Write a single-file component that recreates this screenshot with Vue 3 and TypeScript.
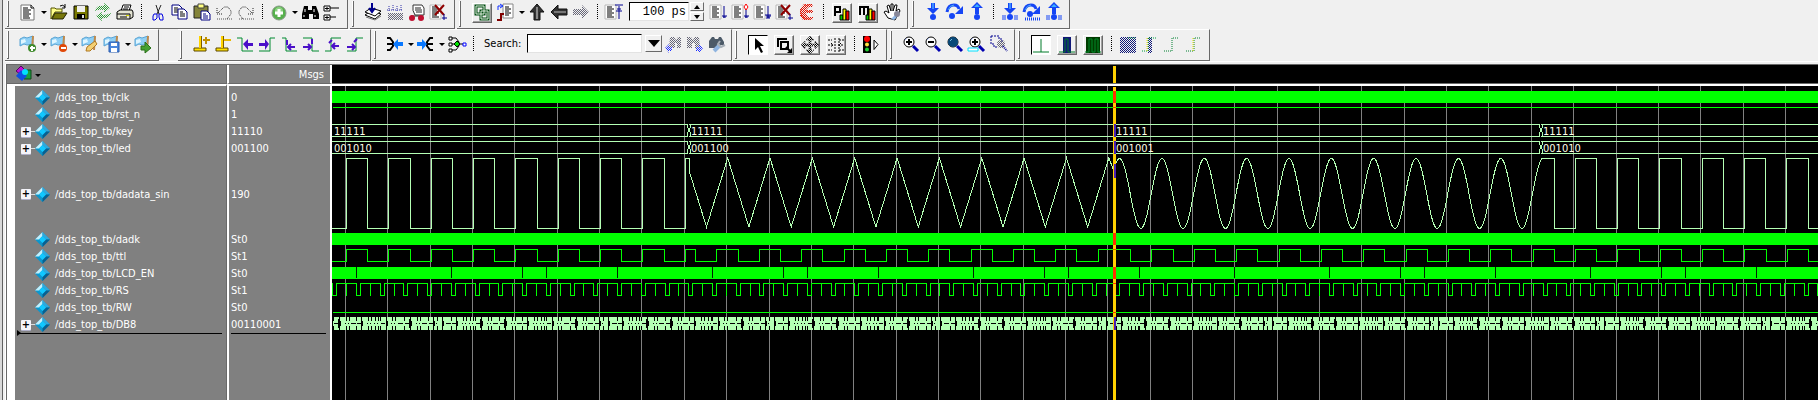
<script setup lang="ts">
import { ref } from 'vue'

type Item =
  | { kind: 'icon' | 'raised' | 'pressed' | 'tight'; icon: string; label: string }
  | { kind: 'caret' | 'sep' | 'time' | 'search' }

const icon = (name: string, label: string): Item => ({ kind: 'icon', icon: name, label })
const raised = (name: string, label: string): Item => ({ kind: 'raised', icon: name, label })
const pressed = (name: string, label: string): Item => ({ kind: 'pressed', icon: name, label })
const caret: Item = { kind: 'caret' }
const sep: Item = { kind: 'sep' }

const doc = '<path d="M1 3h11v14h-11z" fill="#fff" stroke="#b8b8b8"/><path d="M3 5h5M3 7h7M3 9h5M3 11h7M3 13h5M3 15h7" stroke="#000"/>'
const flag = '<path d="M2 5l4-2 3 1 6-2v8l-6 1-3-1-4 2z" fill="#8fd0f6" stroke="#5aa4d4"/><path d="M3 6l4-1 1 3-5 2z" fill="#e0f6ff"/><path d="M14 2l2 0-1 14-2 0z" fill="#c08a4c"/>'
const pole = '<path d="M3 14h12v3h-12z" fill="#ffe000" stroke="#5a4600"/><path d="M8 2h2v12h-2z" fill="#ffd400"/><path d="M10.500 2v12" stroke="#7a5c00"/>'
const lens = '<circle cx="8" cy="8" r="5" fill="#fff" stroke="#000"/><path d="M12 12l5 5" stroke="#0000b0" stroke-width="3"/><path d="M4 6l2-2" stroke="#9ad"/>'
const chart = '<path d="M8 12h3v5h-3z" fill="#0c0" stroke="#000"/><path d="M11 6h3v11h-3z" fill="#ff0" stroke="#000"/><path d="M14 8h3v9h-3z" fill="#f00" stroke="#000"/>'
const downArrow = '<path d="M8 1h4v5h4l-6 6-6-6h4z" fill="#1545f5"/><path d="M9 1h2v6h-2z" fill="#3b8cff"/>'
const upArrow = '<path d="M10 0l6 6h-4v6h-4V6h-4z" fill="#1545f5"/><path d="M10 2l3 3h-6z" fill="#3bb0ff"/>'
const curve = '<path d="M2 10q1-7 7-7 4 0 5 4" fill="none" stroke="#1545f5" stroke-width="3"/><path d="M3 8q2-5 6-5" fill="none" stroke="#4bb0f0"/><path d="M18 4v8h-8z" fill="#1545f5"/>'
const dot = '<circle cx="10" cy="15" r="3" fill="#1545f5"/>'
const bars = '<path d="M3 13v5M5 13v5M15 13v5M17 13v5" stroke="#1545f5"/>'
const stem = '<path d="M15 4v12M13 14h5M14 15h3" stroke="#000090" fill="none"/>'

const icons: Record<string, string> = {
  new: '<path d="M3 3h10l3 3v12H3z" fill="#fff" stroke="#777"/><path d="M13 3v3h3M5 6h5M5 8h8M5 10h6M5 12h8M5 14h6M5 16h7" stroke="#000" fill="none"/>',
  open: '<path d="M2 6h4l1 1h6v3H6l-4 7z" fill="#ffff8c" stroke="#555500"/><path d="M6 11h12l-4 6H3z" fill="#77770a" stroke="#222200"/><path d="M11 4q3-2 5 1M16 2v4h-3" stroke="#000" fill="none"/>',
  save: '<path d="M3 4h14v13H3z" fill="#787800" stroke="#000"/><path d="M6 4h8v6h-8z" fill="#f0f0f0"/><path d="M6 12h8v5h-8z" fill="#000"/><path d="M11 13h2v3h-2z" fill="#ddd"/>',
  refresh: '<path d="M2 9q1-6 9-5V1l6 5-6 5V8Q6 7 2 9z" fill="url(#dither-green)"/><path d="M18 11q-1 6-9 5v3l-6-5 6-4v3q5 0 9-2z" fill="url(#dither-green)"/>',
  print: '<path d="M6 9l2-6h8l-2 6z" fill="#fff" stroke="#000"/><path d="M2 10l3-2h12l1 2v5l-3 2H2z" fill="#e4e4d4" stroke="#000"/><path d="M2 12h13v5M5 15h7M9 5h5M8 7h5" stroke="#000" fill="none"/><path d="M11 13h3v1h-3z" fill="#dd0"/>',
  cut: '<path d="M8 3l3 9M13 3l-4 9" stroke="#222" stroke-width="1" fill="none"/><path d="M6 12h3v4l-2 2H5v-4zM11 12h3l1 3v3h-3l-1-3z" fill="none" stroke="#0000e0"/>',
  copy: '<path d="M2 3h7l3 3v7H2z" fill="#fff" stroke="#000080"/><path d="M4 6h4M4 8h5M4 10h5" stroke="#000"/><path d="M8 7h6l3 3v7H8z" fill="#fff" stroke="#000080"/><path d="M10 10h3M10 12h5M10 14h5" stroke="#000"/>',
  paste: '<path d="M2 4h14v12H2z" fill="#84843a" stroke="#222"/><path d="M6 2h6v4H6z" fill="#ffff80" stroke="#444"/><path d="M9 9h6l3 3v6H9z" fill="#fff" stroke="#000080"/><path d="M11 12h3M11 14h5M11 16h5" stroke="#000080"/>',
  undo: '<path d="M3 6v6h6M4 11l6-6h4l3 4v3l-4 5" fill="none" stroke="#222" stroke-dasharray="1 1"/><path d="M3 17h15" stroke="#555" stroke-dasharray="1 1"/>',
  redo: '<path d="M17 6v6h-6M16 11l-6-6H6L3 9v3l4 5" fill="none" stroke="#222" stroke-dasharray="1 1"/><path d="M3 17h15" stroke="#555" stroke-dasharray="1 1"/>',
  add: '<circle cx="10" cy="11" r="7" fill="#56b04c" stroke="#8a9a88"/><circle cx="10" cy="9" r="4" fill="#8bd080"/><path d="M10 7v8M6 11h8" stroke="#fff" stroke-width="3"/>',
  find: '<path d="M4 4h4v4h4V4h4l3 8v5h-6v-5H9v5H2v-5z" fill="#000"/><path d="M5 7v3M14 7v3M4 13v2M15 13v2" stroke="#fff"/>',
  tree: '<path d="M2 4h6v5H2zM2 13h6v5H2z" fill="#fff" stroke="#000"/><path d="M3 6.500h4M5 5v3M3 15.500h4M5 14v3M8 6h9M8 15h6" stroke="#000"/>',
  stack: '<path d="M2 13l6-4 10 3-6 5z" fill="#fff" stroke="#000"/><path d="M2 10l6-4 10 3-6 5z" fill="#fff" stroke="#000"/><path d="M3 15l9 3 6-4" fill="none" stroke="#777"/><path d="M9 1v8M6 6l3 4 3-4" stroke="#000090" stroke-width="2" fill="none"/>',
  dots: '<path d="M3 11h15v7H3z" fill="url(#dither-gray)"/><path d="M4 4v5M8 3v6M12 4v5M16 3v6M2 8h15" stroke="#3030a8" stroke-dasharray="1 1"/>',
  cart: '<path d="M6 3h9l2 3v7H8q-3-4-2-10z" fill="#fff" stroke="#333"/><path d="M8 6h6M8 8h7M9 10h6M4 14h12" stroke="#222"/><circle cx="5" cy="16" r="3" fill="#c01030"/><circle cx="14" cy="16" r="3" fill="#c01030"/>',
  stop: doc + '<path d="M6 3l9 10M15 3L6 13" stroke="#900000" stroke-width="2"/><path d="M15 12v6M13 16h5" stroke="#000090"/>',
  linked: '<path d="M4 3h8v8H4zM9 8h7v8H9z" fill="none" stroke="#004c10" stroke-width="3"/><path d="M4 3h8v8H4zM9 8h7v8H9z" fill="none" stroke="#e0f0e0"/>',
  restart: '<path d="M7 2h10v14H7z" fill="#fff" stroke="#888"/><path d="M9 5h4M9 7h6M9 9h4M9 11h6M9 13h4" stroke="#000"/><path d="M2 8V4h4M4 2l3 2-3 2" stroke="#1030ff" fill="none"/><path d="M1 18h4v-6h3" stroke="#800000" stroke-width="2" fill="none"/>',
  up: '<path d="M10 2l7 8h-4v8H7v-8H3z" fill="#333" stroke="#111"/><path d="M10 5v12" stroke="#888" stroke-width="2"/>',
  left: '<path d="M2 10l7-7v4h9v6H9v4z" fill="#333" stroke="#111"/><path d="M5 10h12" stroke="#777" stroke-width="2"/>',
  right: '<path d="M18 10l-7-7v4H2v6h9v4z" fill="url(#dither-gray)"/>',
  runTop: doc + '<path d="M11 3h8M15 4v13M12 9h6M13 7h4" stroke="#000090"/>',
  run: doc + stem,
  runTo: doc + stem + '<path d="M15 2l2 3-2 3-2-3z" fill="#fff" stroke="#f00"/>',
  runAll: doc + stem + '<path d="M12 13h6M13 16h4" stroke="#000090"/>',
  halt: '<path d="M7 2h8l1 3h-4l-3 3h7v3H9l2 4h5v2l-3 1H6l-3-4V7z" fill="url(#dither-red)"/><path d="M7 3h7M4 7v6l4 4h6M9 9h6" fill="none" stroke="#e83020" stroke-dasharray="2 1"/>',
  perf: chart + '<path d="M3 13V4h5v5H4" fill="none" stroke="#000" stroke-width="2"/>',
  mem: chart + '<path d="M2 12V4h8v8M6 4v8" fill="none" stroke="#000" stroke-width="2"/>',
  hand: '<path d="M6 16l-4-6 2-1 3 2-2-7 2-1 2 6V2h2v7l2-6h2l-1 6 3-2 1 2-5 9z" fill="#fff" stroke="#000"/><path d="M9 17l5-5 3 1-5 5z" fill="#8fb8e8"/><circle cx="15" cy="12" r="3" fill="#889"/>',
  stepIn: downArrow + dot,
  stepOver: curve + '<circle cx="7" cy="14" r="3" fill="#1545f5"/>',
  stepOut: upArrow + dot,
  stepInBars: downArrow + dot + bars,
  stepOverBars: curve + '<circle cx="8" cy="12" r="3" fill="#1545f5"/><path d="M3 17h15" stroke="#1545f5" stroke-width="3" stroke-dasharray="1 1"/>',
  stepOutBars: upArrow + dot + bars,
  flagAdd: flag + '<circle cx="14" cy="14" r="4" fill="#3f8b2c"/><path d="M14 12v5M12 14h5" stroke="#fff" stroke-width="2"/>',
  flagRemove: flag + '<circle cx="14" cy="14" r="4" fill="#e04808"/><path d="M12 14h5" stroke="#fff" stroke-width="2"/>',
  flagEdit: flag + '<path d="M6 17l1-4 8-6 2 3-7 7z" fill="#f3cf74" stroke="#b07820"/>',
  flagSave: flag + '<path d="M7 8h10v10H7z" fill="#4a86dc" stroke="#2a5cae"/><path d="M9 9h6v3H9zM9 14h6v4H9z" fill="#fff"/>',
  flagGo: flag + '<path d="M8 12h4V8l6 6-6 5v-3H8z" fill="#45a030" stroke="#287018"/>',
  poleAdd: pole + '<path d="M15 3v7M12 6h7" stroke="#c09000" stroke-width="2"/>',
  poleRemove: pole + '<path d="M11 6h7" stroke="#e8b800" stroke-width="2"/>',
  edgePrev: '<path d="M2 4h5v13h11" fill="none" stroke="#008a30"/><path d="M8 10l5-5v4h5v3h-5v4z" fill="#4a10c8"/>',
  edgeNext: '<path d="M2 17h11V4h5" fill="none" stroke="#008a30"/><path d="M12 10L8 5v4H2v3h6v4z" fill="#4a10c8"/>',
  fallPrev: '<path d="M3 4h4v13h11" fill="none" stroke="#008a30"/><path d="M8 6v5M16 13H9M12 10l-3 3 3 3" fill="none" stroke="#4a10c8" stroke-width="2"/>',
  fallNext: '<path d="M2 4h9v13h7" fill="none" stroke="#008a30"/><path d="M11 5v5M2 13h7M7 10l3 3-3 3" fill="none" stroke="#4a10c8" stroke-width="2"/>',
  risePrev: '<path d="M2 17h6V4h10" fill="none" stroke="#008a30"/><path d="M6 9l3-3M16 12H9M12 9l-3 3 3 3" fill="none" stroke="#4a10c8" stroke-width="2"/>',
  riseNext: '<path d="M2 17h9V4h7" fill="none" stroke="#008a30"/><path d="M9 8l3-3M2 13h7M7 10l3 3-3 3" fill="none" stroke="#4a10c8" stroke-width="2"/>',
  driver: '<path d="M2 4h3l3 4v4l-3 4H2M2 10h7" fill="none" stroke="#000" stroke-width="2"/><path d="M8 10l5-5v3h5v4h-5v4z" fill="#0878ff"/>',
  reader: '<path d="M17 4h-3l-3 4v4l3 4h3M17 10h-7" fill="none" stroke="#000" stroke-width="2"/><path d="M11 10L6 5v3H1v4h5v4z" fill="#0878ff"/>',
  network: '<path d="M4 4h5l3 4v4l-3 4H4M4 10h12" fill="none" stroke="#000"/><path d="M2 3h3v3H2zM2 9h3v3H2zM2 15h3v3H2z" fill="#fff" stroke="#000"/><path d="M10 7l3 3-3 3-3-3z" fill="#00e000" stroke="#000"/><path d="M16 9h3v3h-3z" fill="#fff" stroke="#00f"/>',
  findPrev: '<path d="M6 3h4l2 3 2-3h3v11h-4V9h-2v5H5z" fill="url(#dither-gray)"/><path d="M1 14l4-4v3h3v4H5v2z" fill="url(#dither-blue)"/>',
  findNext: '<path d="M3 3h4l2 3 2-3h4l1 11h-5V9H8v5H3z" fill="url(#dither-gray)"/><path d="M19 14l-4-4v3h-3v4h3v2z" fill="url(#dither-blue)"/>',
  findOpts: '<path d="M3 7l3-4h2l1 2h3l1-2h2l3 5v3h-6v3H3z" fill="#4c5a68"/><path d="M8 17l6-6" stroke="#8fb4e0" stroke-width="4"/><path d="M14 7l-2 3 3 3 4-2" stroke="#a8b0b8" fill="none" stroke-width="2"/>',
  pointer: '<path d="M7 3v12l3-3 3 6 2-1-3-6h4z" fill="#000"/>',
  zoomMode: '<path d="M4 12V4h9M7 7h7v7H7z" fill="none" stroke="#000" stroke-width="2"/><path d="M13 18h5v-5z" fill="#000"/><path d="M12 12l5 5" stroke="#000" stroke-width="2"/>',
  pan: '<path d="M10 1l4 4h-3v4h4V6l4 4-4 4v-3h-4v4h3l-4 4-4-4h3v-4H5v3l-4-4 4-4v3h4V5H6z" fill="url(#dither-black)" stroke="#444" stroke-dasharray="1 1"/>',
  edit: '<path d="M2 5h4M2 15h4M2 10h5M5 8l2 2-2 2M9 3v15M13 3v15M13 5h5M13 15h5M17 10h-5M15 8l-2 2 2 2" fill="none" stroke="#000" stroke-dasharray="2 1"/>',
  traffic: '<path d="M2 2h8v17H2z" fill="#000"/><circle cx="6" cy="5" r="3" fill="#f00"/><circle cx="6" cy="10.500" r="2" fill="#ffe040"/><circle cx="6" cy="15.500" r="2" fill="#20d030"/><path d="M13 6l4 4.500-4 5z" fill="#fff" stroke="#000"/>',
  zoomIn: lens + '<path d="M8 5v6M5 8h6" stroke="#000" stroke-width="2"/>',
  zoomOut: lens + '<path d="M5 8h6" stroke="#000" stroke-width="2"/>',
  zoomFull: lens + '<circle cx="8" cy="8" r="5" fill="#084878"/><path d="M5 7l2-2" stroke="#7bd"/>',
  zoomCursor: lens + '<path d="M8 5v6M5 8h6" stroke="#000" stroke-width="2"/><path d="M1 14h10v3H1z" fill="#fff" stroke="#00e0ff"/>',
  zoomRange: '<path d="M2 2h8v3h3v3M2 2v8h3v3h3" fill="none" stroke="#000090" stroke-dasharray="2 1"/><circle cx="12" cy="10" r="4" fill="url(#dither-gray)"/><path d="M14 12l4 5" stroke="#000090" stroke-dasharray="1 1" stroke-width="2"/>',
  pulse: '<path d="M2 17h16M10 4v13" stroke="#007a28" stroke-width="1"/>',
  pulseBlue: '<path d="M6 2h8v16H6z" fill="#101878"/><path d="M2 17h6V4h3v13h7" fill="none" stroke="#007a28"/>',
  pulseGreen: '<path d="M3 2h14v16H3z" fill="#003c00"/><path d="M2 17h4V4h3v13h3V4h3v13h3" fill="none" stroke="#008a28"/>',
  expandAll: '<path d="M2 3h16v16H2z" fill="url(#dither-navy)"/><path d="M10 4h8" stroke="#00a040" stroke-dasharray="1 1"/>',
  expandAt: '<path d="M8 3h4v16H8z" fill="url(#dither-navy)"/><path d="M2 17h5M8 17V4h9" fill="none" stroke="#00a040" stroke-dasharray="1 1"/><path d="M7 4v14" stroke="#ffe000" stroke-dasharray="1 1"/>',
  collapse: '<path d="M2 17h8V4h7" fill="none" stroke="#008030" stroke-dasharray="1 1"/>',
  collapseAt: '<path d="M2 17h8V4h7" fill="none" stroke="#008030" stroke-dasharray="1 1"/><path d="M9 4v14" stroke="#e8e000" stroke-dasharray="1 1"/>',
}

const topRow: Item[][] = [
  [
    icon('new', 'New'), caret, icon('open', 'Open'), icon('save', 'Save'), icon('refresh', 'Reload'), icon('print', 'Print'), sep,
    icon('cut', 'Cut'), icon('copy', 'Copy'), icon('paste', 'Paste'), icon('undo', 'Undo'), icon('redo', 'Redo'), sep,
    icon('add', 'Add'), caret, icon('find', 'Find'), icon('tree', 'Collapse all'),
  ],
  [icon('stack', 'Compile'), icon('dots', 'Compile out of date'), icon('cart', 'Simulate'), icon('stop', 'End simulation')],
  [
    raised('linked', 'Linked'), icon('restart', 'Restart'), caret, icon('up', 'Environment up'), icon('left', 'Back'), icon('right', 'Forward'), sep,
    icon('runTop', 'Restart run'), { kind: 'time' }, icon('run', 'Run'), icon('runTo', 'Continue run'), icon('runAll', 'Run all'),
    icon('stop', 'Break'), icon('halt', 'Stop'), sep, raised('perf', 'Performance'), raised('mem', 'Memory'), icon('hand', 'Edit breakpoint'),
  ],
  [
    icon('stepIn', 'Step into'), icon('stepOver', 'Step over'), icon('stepOut', 'Step out'), sep,
    icon('stepInBars', 'Step into instance'), icon('stepOverBars', 'Step over instance'), icon('stepOutBars', 'Step out of instance'),
  ],
]

const markerGroup: Item[] = [
  icon('flagAdd', 'Add bookmark'), caret, icon('flagRemove', 'Remove bookmark'), caret, icon('flagEdit', 'Edit bookmark'),
  icon('flagSave', 'Save bookmark'), caret, icon('flagGo', 'Go to bookmark'),
]

const bottomRow: Item[][] = [
  markerGroup,
  [
    icon('poleAdd', 'Insert cursor'), icon('poleRemove', 'Delete cursor'), icon('edgePrev', 'Previous transition'), icon('edgeNext', 'Next transition'),
    icon('fallPrev', 'Previous falling edge'), icon('fallNext', 'Next falling edge'), icon('risePrev', 'Previous rising edge'), icon('riseNext', 'Next rising edge'),
  ],
  [
    icon('driver', 'Drivers'), caret, icon('reader', 'Readers'), caret, icon('network', 'Dataflow'), sep, { kind: 'search' },
    { kind: 'tight', icon: 'findPrev', label: 'Search backward' }, icon('findNext', 'Search forward'), icon('findOpts', 'Search options'),
  ],
  [pressed('pointer', 'Select mode'), raised('zoomMode', 'Zoom mode'), raised('pan', 'Pan mode'), raised('edit', 'Edit mode'), sep, icon('traffic', 'Stop drawing')],
  [icon('zoomIn', 'Zoom in'), icon('zoomOut', 'Zoom out'), icon('zoomFull', 'Zoom full'), icon('zoomCursor', 'Zoom on cursor'), icon('zoomRange', 'Zoom range')],
  [
    pressed('pulse', 'Event mode'), raised('pulseBlue', 'Delta at cursor'), raised('pulseGreen', 'Delta everywhere'), sep,
    icon('expandAll', 'Expand all'), icon('expandAt', 'Expand at cursor'), icon('collapse', 'Collapse'), icon('collapseAt', 'Collapse at cursor'),
  ],
]

const signals = [
  { name: 'clk', value: '0' },
  { name: 'rst_n', value: '1' },
  { name: 'key', value: '11110', bus: true },
  { name: 'led', value: '001100', bus: true },
  { name: 'dadata_sin', value: '190', bus: true, tall: true },
  { name: 'dadk', value: 'St0' },
  { name: 'ttl', value: 'St1' },
  { name: 'LCD_EN', value: 'St0' },
  { name: 'RS', value: 'St1' },
  { name: 'RW', value: 'St0' },
  { name: 'DB8', value: '00110001', bus: true },
]

const runLength = ref('100 ps')
const query = ref('')

/* Waveform geometry, in pixels from the left edge of the trace area */
const END = 2600
const PERIOD = 42.35
const CURSOR = 782
const TO_TRIANGLE = 357
const TO_SQUARE = 1209
const series = (start: number, step: number, end = END) =>
  Array.from({ length: Math.max(0, Math.ceil((end - start) / step)) }, (_, i) => start + i * step)

const grid = series(13, PERIOD).map(Math.round)

const squareWave = (edges: number[], from: number, level: number, hi: number, lo: number) => {
  let d = `${from} ${level ? hi : lo}.5`
  let on = level
  for (const x of edges) {
    on = on ? 0 : 1
    d += `H${Math.round(x)}.5V${on ? hi : lo}.5`
  }
  return d
}

const firstSquare = series(14, PERIOD / 2, TO_TRIANGLE)
const lastSquare = series(1221.5, PERIOD / 2)
const HI = 72
const LO = 142

let analog = `M${squareWave(firstSquare, 0, 0, HI, LO)}H${TO_TRIANGLE}.5V86`
series(374.5, PERIOD / 2, CURSOR).forEach((x, i) => {
  analog += `L${x.toFixed(1)} ${i % 2 ? HI : LO - 1}`
})
analog += `L${CURSOR} 85V77`
for (let x = CURSOR + 1; x <= TO_SQUARE; x++) {
  const y = (HI + LO + 1) / 2 - ((LO - HI) / 2) * Math.cos((2 * Math.PI * (x - 787.6)) / PERIOD)
  analog += `L${x} ${y.toFixed(1)}`
}
analog += `L${squareWave(lastSquare, TO_SQUARE, 1, HI, LO)}`

const ttl = 'M' + squareWave(
  [...firstSquare.slice(0, 17), ...series(363.3, PERIOD / 2, 782), ...series(798.3, PERIOD / 2)],
  0, 0, 163, 175,
)

const STEP = 23.73
let rs = ''
for (const c of series(2.3, STEP)) {
  const l = Math.max(0, Math.round(c - 2))
  const r = Math.round(c + 2)
  const thin = Math.round(c + STEP / 2)
  rs += `M${l}.5 197V209.5H${r}.5V197.5H${Math.round(c + STEP) - 2}M${thin}.5 197V210`
}

const lcdGaps = [24, 119, 190, 214, 285, 380, 451, 475, 546, 641, 712, 736, 807, 902, 997, 1068, 1092, 1163, 1258, 1329, 1353, 1424]

const marks: Record<string, [number, string][]> = {
  A: [[5, 'arrow'], [12, 'tick'], [15, 'tick'], [19, 'tick'], [22, 'tick']],
  C: [[6, 'arrow'], [12, 'tick'], [15, 'tick']],
  D: [[6, 'blob'], [13, 'tick'], [16, 'tick']],
  E: [[5, 'arrow'], [9, 'tick'], [14, 'arrow']],
}
const order = ['D', 'A', 'C', 'D', 'E', 'A', 'D']
let busMarks = ''
series(0.6, STEP).forEach((g, i) => {
  const x = Math.round(g)
  const tick = (t: number) => `M${t} 231h1v4h-1zM${t} 240h1v4h-1z`
  busMarks += tick(x) + `M${x + 1} 237h4v1h-4z`
  const type = order[i % 7]
  for (const [offset, shape] of marks[type]) {
    const t = x + offset
    busMarks += tick(t)
    if (shape === 'arrow') busMarks += `M${t} 234h1v1h1v5h-1v1h-1z`
    else if (shape === 'blob') busMarks += `M${t - 1} 233h2v2h1v5h-1v2h-2z`
    else busMarks += `M${t - 1} 237h1v1h-1z`
  }
  if (type !== 'A') busMarks += `M${x + 18} 237h5v1h-5z`
})

const buses = [
  { top: 38, labels: ['11111', '11111', '11111', '11111'] },
  { top: 55, labels: ['001010', '001100', '001001', '001010'] },
]
const spans = [[0, 356], [357, 782], [782, 1208], [1209, END]]
const busPath = (top: number) =>
  spans.map(([a, b], i) => {
    const left = i ? `M${a + 2} ${top}.5L${a}.5 ${top + 6}L${a + 2} ${top + 12}.5` : ''
    const right = `M${b - 1} ${top}.5L${b}.5 ${top + 6}L${b - 1} ${top + 12}.5`
    return `M${a} ${top}.5H${b}M${a} ${top + 12}.5H${b}${left}${right}`
  }).join('')

const solidRows = [5, 147, 181]
const cursorHits = [[5, 12], [21, 1], [147, 12], [163, 1], [181, 12], [197, 1], [226, 1]]
const cursorBusHits = [[38, 13], [55, 13], [78, 14], [231, 13]]
</script>

<template>
  <div class="window">
    <svg class="defs" aria-hidden="true">
      <defs>
        <pattern
          v-for="[id, color] in [['gray', '#667'], ['green', '#2f9a38'], ['red', '#e01000'], ['blue', '#2030ff'], ['navy', '#101878'], ['black', '#000']]"
          :id="'dither-' + id" :key="id" width="2" height="2" patternUnits="userSpaceOnUse"
        >
          <path d="M0 0h1v1h-1zM1 1h1v1h-1z" :fill="color" />
        </pattern>
      </defs>
    </svg>

    <header class="toolbars">
      <div v-for="(row, r) in [topRow, bottomRow]" :key="r" class="bar" :class="r ? 'bar-lower' : 'bar-upper'">
        <div v-for="(group, g) in row" :key="g" class="group" :class="{ spaced: group === markerGroup }" role="toolbar">
          <template v-for="(item, i) in group" :key="i">
            <button v-if="item.kind === 'caret'" class="caret" aria-label="More"><span /></button>
            <span v-else-if="item.kind === 'sep'" class="sep" />
            <span v-else-if="item.kind === 'time'" class="time">
              <input v-model="runLength" aria-label="Run length">
              <span class="spin">
                <button aria-label="Increase"><i class="tri up" /></button>
                <button aria-label="Decrease"><i class="tri" /></button>
              </span>
            </span>
            <span v-else-if="item.kind === 'search'" class="search">
              <label for="query">Search:</label>
              <input id="query" v-model="query">
              <button aria-label="Search history"><i class="tri big" /></button>
            </span>
            <button v-else-if="'icon' in item" class="tool" :class="item.kind" :aria-label="item.label">
              <svg viewBox="0 0 20 20" width="20" height="20" v-html="icons[item.icon]" />
            </button>
          </template>
        </div>
      </div>
    </header>

    <main class="wave">
      <div class="pane">
        <table class="signals">
          <thead>
            <tr>
              <th class="name-head">
                <button class="objects" aria-label="Object filter">
                  <svg viewBox="0 0 28 18" width="28" height="18">
                    <path d="M6 1l5 5-5 4-5-4z" fill="#c010d8" stroke="#500860" />
                    <path d="M9 5h7v9H9z" fill="#18a040" stroke="#104818" />
                    <path d="M6 5l6 6-5 5-6-5z" fill="#1050e0" />
                    <circle cx="10" cy="7" r="3" fill="#00e0ff" />
                    <path d="M20 9h6l-3 3z" fill="#000" />
                  </svg>
                </button>
              </th>
              <th class="value-head">Msgs</th>
            </tr>
          </thead>
          <tbody>
            <tr class="pad"><td /><td /></tr>
            <tr v-for="s in signals" :key="s.name" :class="s.tall ? 'tall' : 'line'">
              <td>
                <div class="cell">
                  <span class="twig"><button v-if="s.bus" :aria-label="'Expand ' + s.name">+</button></span>
                  <svg class="gem" viewBox="0 0 15 15" width="15" height="15">
                    <path d="M7.500 0L15 7.500 7.500 15 0 7.500z" fill="#0c96cc" />
                    <path d="M7.500 0v4L4 7.500H0z" fill="#c4f0fc" />
                    <path d="M7.500 0L15 7.500h-4L7.500 4z" fill="#30a8dc" />
                    <path d="M15 7.500L7.500 15v-4L11 7.500z" fill="#086090" />
                    <path d="M7.500 4L11 7.500 7.500 11 4 7.500z" fill="#10c8ff" />
                  </svg>
                  <span>/dds_top_tb/{{ s.name }}</span>
                </div>
              </td>
              <td class="value">{{ s.value }}</td>
            </tr>
          </tbody>
        </table>
        <div class="rest">
          <div class="rest-name"><div class="rule insert" /></div>
          <div class="rest-value"><div class="rule" /></div>
        </div>
      </div>

      <section class="traces">
        <div class="ruler"><span class="ruler-cursor" /></div>
        <svg class="plot" shape-rendering="crispEdges">
          <rect v-for="x in grid" :key="x" :x="x" y="0" width="1" height="100%" fill="#808080" />
          <rect v-for="y in solidRows" :key="y" x="0" :y="y" width="100%" height="12" fill="#00ff00" />
          <rect v-for="x in lcdGaps" :key="'g' + x" :x="x" y="181" width="1" height="11" fill="#002000" />
          <path :d="`M1 21.5H${END}M1 226.5H${END}`" class="digital" />
          <path :d="ttl" class="digital" />
          <path :d="rs" class="digital" />
          <path v-for="b in buses" :key="b.top" :d="busPath(b.top)" class="vector" />
          <path :d="analog" class="vector" />
          <rect x="1" y="231" width="100%" height="13" fill="#b4ffb4" />
          <path :d="busMarks" fill="#000" />
          <rect :x="CURSOR - 1" y="1" width="3" height="100%" fill="#ffd000" />
          <rect v-for="[y, h] in cursorHits" :key="'r' + y" :x="CURSOR - 1" :y="y" width="3" :height="h" fill="#ff2f00" />
          <rect v-for="[y, h] in cursorBusHits" :key="'b' + y" :x="CURSOR" :y="y" width="2" :height="h" fill="#4b20b4" />
          <template v-for="b in buses" :key="'t' + b.top">
            <text v-for="(t, i) in b.labels" :key="i" :x="spans[i][0] + 2" :y="b.top + 11">{{ t }}</text>
          </template>
        </svg>
      </section>
    </main>
  </div>
</template>

<style>
body {
  margin: 0;
  background: #f0f0f0;
}
</style>

<style scoped>
.window {
  display: flex;
  flex-direction: column;
  height: 100vh;
  min-height: 350px;
  box-sizing: border-box;
  padding-left: 3px;
  overflow: hidden;
  background: #f0f0f0;
  border-left: 2px solid #d8d8d8;
  box-shadow: inset 1px 0 #606060;
  font: 11px "DejaVu Sans Condensed", "Noto Sans", sans-serif;
  color: #000;
}
.defs {
  position: absolute;
  width: 0;
  height: 0;
}
button {
  padding: 0;
  border: 0;
  background: none;
  font: inherit;
  flex: none;
}
.toolbars {
  flex: none;
  border-bottom: 1px solid #fff;
}
.bar {
  display: flex;
  box-sizing: border-box;
}
.bar-upper {
  height: 29px;
  gap: 2px;
}
.bar-lower {
  height: 32px;
  gap: 1px;
}
.group {
  display: flex;
  flex: none;
  align-items: center;
  position: relative;
  box-sizing: border-box;
  padding: 0 4px 5px 12px;
  border-right: 1px solid #696969;
  border-bottom: 1px solid #696969;
}
.bar-lower .group {
  border-top: 1px solid #fff;
  padding-bottom: 3px;
}
.group.spaced {
  margin-right: 18px;
}
.group::before {
  content: "";
  position: absolute;
  left: 2px;
  top: 1px;
  bottom: 1px;
  width: 1px;
  border: 1px solid #696969;
  border-width: 0 1px 1px 0;
  background: #fff;
}
.tool {
  display: flex;
  align-items: center;
  justify-content: center;
  width: 22px;
  height: 22px;
}
.tool.tight {
  width: 18px;
}
.tool.raised,
.tool.pressed {
  width: 20px;
  height: 20px;
  margin: 2px 3px 0;
  box-sizing: border-box;
  border: 1px solid;
}
.tool.raised {
  border-color: #fff #696969 #696969 #fff;
  box-shadow: inset -1px -1px #a0a0a0;
}
.tool.pressed {
  border-color: #000 #fff #fff #000;
  background: #fff;
}
.tool svg {
  flex: none;
}
.caret {
  width: 9px;
  height: 20px;
}
.caret span {
  display: block;
  margin: 2px auto 0;
  width: 0;
  border: 3px solid transparent;
  border-top-color: #000;
  border-bottom: 0;
}
.sep {
  width: 11px;
  height: 16px;
  background: repeating-linear-gradient(#000 0 1px, transparent 1px 2px) center / 1px 100% no-repeat;
}
.time {
  display: flex;
  gap: 1px;
  margin: 0 4px;
}
.time input {
  width: 60px;
  height: 19px;
  box-sizing: border-box;
  padding: 0 2px;
  border: 1px solid;
  border-color: #000 #e3e3e3 #e3e3e3 #000;
  background: #fff;
  font: 12px "Liberation Mono", monospace;
  text-align: right;
}
.spin {
  display: flex;
  flex-direction: column;
  gap: 1px;
}
.spin button {
  width: 14px;
  height: 9px;
  box-sizing: border-box;
  border: 1px solid;
  border-color: #fff #696969 #696969 #fff;
  display: flex;
  align-items: center;
  justify-content: center;
}
.tri {
  border: 3px solid transparent;
  border-top: 4px solid #000;
  border-bottom: 0;
}
.tri.up {
  border-top: 0;
  border-bottom: 4px solid #000;
}
.tri.big {
  border-width: 7px 6px 0;
}
.search {
  display: flex;
  align-items: center;
  margin: 0 3px 0 5px;
}
.search label {
  width: 43px;
}
.search input {
  width: 115px;
  height: 19px;
  box-sizing: border-box;
  border: 1px solid;
  border-color: #000 #e3e3e3 #e3e3e3 #000;
  background: #fff;
  font: inherit;
}
.search button {
  width: 17px;
  height: 17px;
  margin-left: 3px;
  display: flex;
  align-items: center;
  justify-content: center;
  border: 1px solid;
  border-color: #fff #696969 #696969 #fff;
  box-sizing: border-box;
}
.wave {
  display: flex;
  flex: 1;
  min-height: 0;
  margin-top: 2px;
  border-left: 1px solid #fff;
}
.pane {
  display: flex;
  flex-direction: column;
  flex: none;
  width: 326px;
  box-sizing: border-box;
  background: #808080;
  border-top: 1px solid #696969;
  border-left: 1px solid #696969;
  color: #fff;
}
.signals {
  width: 100%;
  table-layout: fixed;
  border-spacing: 0;
}
th {
  height: 18px;
  padding: 0;
  border-bottom: 1px solid #696969;
  font-weight: 400;
}
.name-head {
  width: 219px;
  text-align: left;
  border-right: 1px solid #696969;
}
.value-head {
  text-align: right;
  padding-right: 6px;
  border-left: 2px solid #fff;
  border-right: 2px solid #fff;
}
.objects,
.objects svg {
  display: block;
}
.objects {
  margin-left: 8px;
}
td {
  padding: 0;
  line-height: 15px;
}
td:first-child,
.rest-name {
  border-left: 8px solid #fff;
  border-right: 1px solid #696969;
}
td:last-child,
.rest-value {
  border-left: 2px solid #fff;
  border-right: 2px solid #fff;
}
.pad td {
  height: 3px;
  border-top: 2px solid #fff;
}
.line td {
  height: 17px;
}
.tall td {
  height: 74px;
}
.cell {
  display: flex;
  align-items: center;
}
.cell > span:last-child {
  margin-left: 5px;
}
.gem {
  flex: none;
}
.twig {
  width: 14px;
  height: 10px;
  margin-left: 6px;
  flex: none;
}
.twig:has(button) {
  background: linear-gradient(#ddd, #ddd) 0 50% / 100% 1px no-repeat;
}
.twig button {
  display: block;
  width: 10px;
  height: 10px;
  border-radius: 1px;
  background: #f4f4fa;
  color: #000;
  font-weight: 700;
  line-height: 10px;
  text-align: center;
  box-shadow: 0 1px #b0b0c8;
}
td.value {
  padding-left: 2px;
}
.rest {
  display: flex;
  flex: 1;
}
.rest-name {
  width: 220px;
  box-sizing: border-box;
}
.rest-value {
  flex: 1;
}
.rule {
  height: 1px;
  margin: 0 4px 0 2px;
  background: #000;
}
.rule.insert {
  position: relative;
}
.rule.insert::before {
  content: "";
  position: absolute;
  left: 0;
  top: -3px;
  border: 3px solid transparent;
  border-left: 4px solid #000;
  border-right: 0;
}
.traces {
  display: flex;
  flex-direction: column;
  flex: 1;
  min-width: 0;
  background: #000;
  border-top: 1px solid #696969;
}
.ruler {
  height: 18px;
  flex: none;
  border-bottom: 1px solid #696969;
  box-shadow: 0 2px #fff;
  margin-bottom: 2px;
}
.ruler-cursor {
  display: block;
  width: 3px;
  height: 17px;
  margin-left: 781px;
  border-top: 1px solid #000;
  background: #ffd000;
}
.plot {
  display: block;
  flex: 1;
  width: 100%;
  min-height: 0;
}
.plot text {
  fill: #ffffe8;
  font-size: 11px;
}
.digital,
.vector {
  fill: none;
  stroke: #00ff00;
  stroke-width: 1;
}
.vector {
  stroke: #b4ffb4;
}
</style>
